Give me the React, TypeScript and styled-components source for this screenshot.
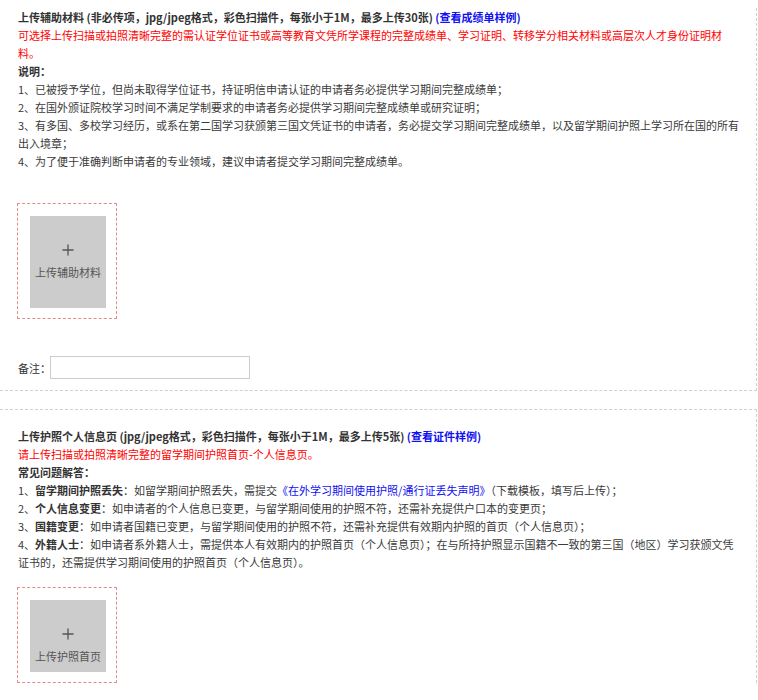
import React from "react";
import styled, { createGlobalStyle } from "styled-components";

const Global = createGlobalStyle`
  html, body { margin: 0; padding: 0; background: #fff; }
  body {
    font-family: "Noto Sans CJK SC", "Microsoft YaHei", sans-serif;
    font-size: 11px;
    color: #333;
  }
`;

const Page = styled.div`
  width: 758px;
  padding-top: 8px;
  box-sizing: border-box;
`;

const Section = styled.section<{ $top?: boolean }>`
  border-right: 1px dashed #d0d0d0;
  border-bottom: ${(p) => (p.$top ? "none" : "1px dashed #d0d0d0")};
  border-top: ${(p) => (p.$top ? "1px dashed #d0d0d0" : "none")};
  margin-top: ${(p) => (p.$top ? "18px" : "0")};
  padding: ${(p) => (p.$top ? "17px 0 0 18px" : "0 0 11px 18px")};
  width: 757px;
  box-sizing: border-box;
`;

const Text = styled.div`
  width: 723px;
  line-height: 18px;
  font-size: 11px;
`;

const Title = styled.div`
  font-weight: bold;
  color: #333;
`;

const Link = styled.a`
  color: #1010f0;
  text-decoration: none;
  cursor: pointer;
`;

const Red = styled.div`
  color: #ff0000;
`;

const Label = styled.div`
  font-weight: bold;
  color: #333;
`;

const Item = styled.div`
  color: #3a3a3a;
`;

const B = styled.b`
  font-weight: bold;
  color: #333;
`;

const UploadFrame = styled.div<{ $mt: number }>`
  margin-top: ${(p) => p.$mt}px;
  margin-left: -1px;
  width: 100px;
  box-sizing: border-box;
  border: 1px dashed #e38a8a;
  padding: 12px 10px 10px 12px;
`;

const UploadTile = styled.div<{ $h: number }>`
  width: 76px;
  height: ${(p) => p.$h}px;
  background: #cccccc;
  display: flex;
  flex-direction: column;
  align-items: center;
  padding-top: 28px;
  box-sizing: border-box;
  cursor: pointer;
`;

const TileText = styled.div`
  margin-top: 9px;
  font-size: 11px;
  line-height: 14px;
  color: #555;
  white-space: nowrap;
`;

const RemarkRow = styled.div`
  margin-top: 37px;
  display: flex;
  align-items: center;
  line-height: 18px;
`;

const RemarkLabel = styled.span`
  color: #333;
  white-space: nowrap;
  flex-shrink: 0;
  width: 32px;
`;

const Input = styled.input`
  width: 200px;
  height: 23px;
  box-sizing: border-box;
  border: 1px solid #cccccc;
  padding: 0 4px;
  margin: 0;
  outline: none;
  font-family: inherit;
  font-size: 11px;
`;

const Plus = () => (
  <svg width="12" height="12" viewBox="0 0 12 12">
    <path d="M6 0.5V11.5M0.5 6H11.5" stroke="#555" strokeWidth="1.3" fill="none" />
  </svg>
);

const Upload: React.FC<{ label: string; h: number; mt: number }> = ({ label, h, mt }) => (
  <UploadFrame $mt={mt}>
    <UploadTile $h={h}>
      <Plus />
      <TileText>{label}</TileText>
    </UploadTile>
  </UploadFrame>
);

export default function App() {
  return (
    <Page>
      <Global />
      <Section>
        <Text>
          <Title>
            上传辅助材料 (非必传项，jpg/jpeg格式，彩色扫描件，每张小于1M，最多上传30张){" "}
            <Link>(查看成绩单样例)</Link>
          </Title>
          <Red>
            可选择上传扫描或拍照清晰完整的需认证学位证书或高等教育文凭所学课程的完整成绩单、学习证明、转移学分相关材料或高层次人才身份证明材料。
          </Red>
          <Label>说明：</Label>
          <Item>1、已被授予学位，但尚未取得学位证书，持证明信申请认证的申请者务必提供学习期间完整成绩单；</Item>
          <Item>2、在国外颁证院校学习时间不满足学制要求的申请者务必提供学习期间完整成绩单或研究证明；</Item>
          <Item>
            3、有多国、多校学习经历，或系在第二国学习获颁第三国文凭证书的申请者，务必提交学习期间完整成绩单，以及留学期间护照上学习所在国的所有出入境章；
          </Item>
          <Item>4、为了便于准确判断申请者的专业领域，建议申请者提交学习期间完整成绩单。</Item>
        </Text>
        <Upload label="上传辅助材料" h={92} mt={33} />
        <RemarkRow>
          <RemarkLabel>备注：</RemarkLabel>
          <Input type="text" />
        </RemarkRow>
      </Section>
      <Section $top>
        <Text>
          <Title>
            上传护照个人信息页 (jpg/jpeg格式，彩色扫描件，每张小于1M，最多上传5张){" "}
            <Link>(查看证件样例)</Link>
          </Title>
          <Red>请上传扫描或拍照清晰完整的留学期间护照首页-个人信息页。</Red>
          <Label>常见问题解答：</Label>
          <Item>
            1、<B>留学期间护照丢失</B>：如留学期间护照丢失，需提交
            <Link>《在外学习期间使用护照/通行证丢失声明》</Link>（下载模板，填写后上传）；
          </Item>
          <Item>
            2、<B>个人信息变更</B>：如申请者的个人信息已变更，与留学期间使用的护照不符，还需补充提供户口本的变更页；
          </Item>
          <Item>
            3、<B>国籍变更</B>：如申请者国籍已变更，与留学期间使用的护照不符，还需补充提供有效期内护照的首页（个人信息页）；
          </Item>
          <Item>
            4、<B>外籍人士</B>：如申请者系外籍人士，需提供本人有效期内的护照首页（个人信息页）；在与所持护照显示国籍不一致的第三国（地区）学习获颁文凭证书的，还需提供学习期间使用的护照首页（个人信息页）。
          </Item>
        </Text>
        <Upload label="上传护照首页" h={72} mt={16} />
      </Section>
    </Page>
  );
}
